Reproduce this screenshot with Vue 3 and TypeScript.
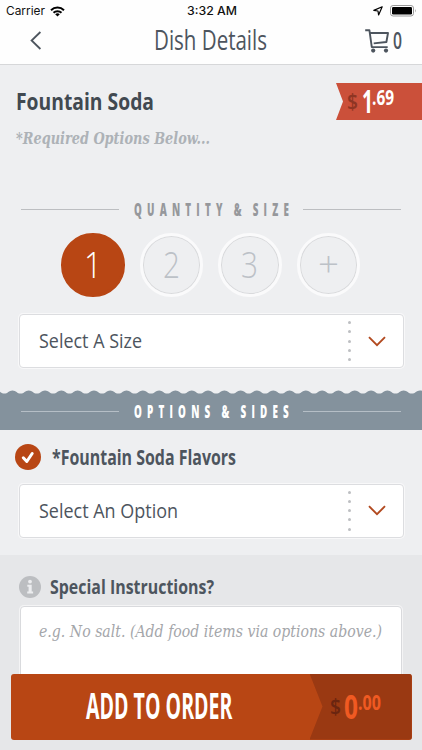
<script setup lang="ts">
import { h, ref } from 'vue'

interface FitProps {
  text: string
  w: number
  size: number
}

// One line of text condensed to a given width; capitals sit centred in the box.
const Fit = (props: FitProps) =>
  h('svg', { width: props.w, height: props.size, overflow: 'visible', 'aria-label': props.text }, [
    h(
      'text',
      {
        x: 0,
        y: props.size * 0.857,
        'font-size': props.size,
        textLength: props.w,
        lengthAdjust: 'spacingAndGlyphs',
        fill: 'currentColor',
      },
      props.text,
    ),
  ])
Fit.props = ['text', 'w', 'size']

const quantities = [
  { label: '1', w: 18, size: 36 },
  { label: '2', w: 17, size: 36 },
  { label: '3', w: 17, size: 36 },
  { label: '+', w: 21, size: 34 },
]
const selected = ref('1')

const dots = [0, 1, 2, 3, 4]

// Scalloped top edge of the options band.
const period = 16.3
const crests = Array.from({ length: 28 }, (_, i) => {
  const x = -12 + i * period
  return `C${x + 3.5} 3.6 ${x + 4.5} .4 ${x + 8.15} .4 S${x + 12.8} 3.6 ${x + period} 3.6`
}).join(' ')
const wavePath = `M-12 3.6 ${crests} V6 H-12 Z`
</script>

<template>
  <div class="screen">
    <div class="status">
      <div class="carrier">
        <Fit class="sys" text="Carrier" :w="39" :size="11.6" />
        <svg width="15" height="11" viewBox="0 0 15 11" fill="none" stroke="#000" stroke-width="2">
          <path d="M1 4.2a9.3 9.3 0 0 1 13 0M3.5 6.8a5.7 5.7 0 0 1 8 0" />
          <path d="M7.5 10.6 5.2 8.3a3.3 3.3 0 0 1 4.6 0z" fill="#000" stroke="none" />
        </svg>
      </div>
      <Fit class="sys time" text="3:32 AM" :w="50" :size="11.6" />
      <div class="power">
        <svg width="10" height="10" viewBox="0 0 10 10" fill="none" stroke="#000" stroke-width="1.2" stroke-linejoin="round">
          <path d="M9.2.8 5.6 9 5 5 .8 4.4z" />
        </svg>
        <svg width="27" height="12" viewBox="0 0 27 12">
          <rect x=".5" y=".5" width="23" height="10.5" rx="2.6" fill="#fff" stroke="#999" />
          <rect x="2" y="2" width="20" height="7.5" rx="1.2" />
          <path d="M25 4q1.4 1.7 0 3.4z" fill="#888" />
        </svg>
      </div>
    </div>

    <header class="nav">
      <svg class="back" width="12" height="19" viewBox="0 0 12 19" fill="none" stroke="#4d555e" stroke-width="1.8">
        <path d="M10.4 1 1.6 9.5l8.8 8.5" />
      </svg>
      <Fit class="title" text="Dish Details" :w="113" :size="27" />
      <div class="cart">
        <svg width="24" height="24" viewBox="0 0 24 24" fill="none" stroke="#4d555e" stroke-width="1.9" stroke-linejoin="round">
          <path d="M.2 1.2h4.2L6.8 18.1h15.9M5 4h18l-1.6 9-12.7 1.4" />
          <circle cx="8.2" cy="21.6" r="2.1" fill="#4d555e" stroke="none" />
          <circle cx="21" cy="21.6" r="2.1" fill="#4d555e" stroke="none" />
        </svg>
        <Fit class="count" text="0" :w="9" :size="23.5" />
      </div>
    </header>

    <section class="dish">
      <div class="names">
        <Fit class="heading" text="Fountain Soda" :w="138" :size="23" />
        <Fit class="note" text="*Required Options Below..." :w="194" :size="16.5" />
      </div>
      <div class="tag">
        <Fit class="dollar" text="$" :w="11" :size="21" />
        <Fit class="whole" text="1" :w="11" :size="33" />
        <Fit class="cents" text=".69" :w="22" :size="21" />
      </div>
    </section>

    <div class="divider">
      <i /><Fit text="QUANTITY &amp; SIZE" :w="160" :size="17" /><i />
    </div>

    <div class="quantities">
      <button
        v-for="q in quantities"
        :key="q.label"
        class="qty"
        :class="{ active: q.label === selected }"
        @click="selected = q.label"
      >
        <Fit :text="q.label" :w="q.w" :size="q.size" />
      </button>
    </div>

    <div class="select size-select">
      <Fit text="Select A Size" :w="103" :size="20" />
      <span class="dots"><b v-for="d in dots" :key="d" /></span>
      <svg width="18" height="11" viewBox="0 0 18 11" fill="none" stroke="#b24a20" stroke-width="1.9">
        <path d="m1 1.2 8 8 8-8" />
      </svg>
    </div>

    <svg class="wave" width="422" height="5" viewBox="0 0 422 5">
      <path :d="wavePath" fill="#84929d" />
    </svg>
    <div class="divider band">
      <i /><Fit text="OPTIONS &amp; SIDES" :w="160" :size="17" /><i />
    </div>

    <div class="option-title">
      <svg width="26" height="26" viewBox="0 0 26 26">
        <circle cx="13" cy="13" r="13" fill="#b84614" />
        <path d="m8.3 13.8 3.5 3.7 5.4-8" fill="none" stroke="#fff" stroke-width="3" stroke-linecap="round" stroke-linejoin="round" />
      </svg>
      <Fit text="*Fountain Soda Flavors" :w="184" :size="20.5" />
    </div>

    <div class="select">
      <Fit text="Select An Option" :w="139" :size="20" />
      <span class="dots"><b v-for="d in dots" :key="d" /></span>
      <svg width="18" height="11" viewBox="0 0 18 11" fill="none" stroke="#b24a20" stroke-width="1.9">
        <path d="m1 1.2 8 8 8-8" />
      </svg>
    </div>

    <section class="special">
      <div class="special-title">
        <svg width="22" height="22" viewBox="0 0 22 22">
          <circle cx="11" cy="11" r="11" fill="#bcbec1" />
          <circle cx="11" cy="5.6" r="1.9" fill="#ecedef" />
          <path d="M8.3 8.8h4.4v6.7h1.4v2H8.2v-2h1.4v-4.7H8.3z" fill="#ecedef" />
        </svg>
        <Fit text="Special Instructions?" :w="164" :size="20" />
      </div>
      <div class="textarea">
        <Fit text="e.g. No salt. (Add food items via options above.)" :w="343" :size="16.5" />
      </div>
    </section>

    <div class="order">
      <div class="order-label"><Fit text="ADD TO ORDER" :w="146.5" :size="36.5" /></div>
      <div class="total">
        <Fit class="dollar" text="$" :w="11" :size="21" />
        <Fit class="whole" text="0" :w="14" :size="34" />
        <Fit class="cents" text=".00" :w="23" :size="21" />
      </div>
    </div>
  </div>
</template>

<style>
body {
  margin: 0;
  overflow: hidden;
}
</style>

<style scoped>
.screen {
  position: relative;
  width: 422px;
  height: 750px;
  overflow: hidden;
  background: #eeeff1;
  color: #4d555e;
  font-family: 'Open Sans', 'Noto Sans', sans-serif;
}
svg {
  display: block;
  flex: none;
}
.status {
  display: grid;
  grid-template-columns: 1fr auto 1fr;
  align-items: center;
  height: 22px;
  padding: 0 5px 0 6px;
  background: #fefefe;
  color: #111;
}
.carrier,
.power {
  display: flex;
  align-items: center;
  gap: 5px;
}
.power {
  justify-content: flex-end;
  gap: 7px;
}
.sys {
  font-family: Inter, 'Liberation Sans', sans-serif;
}
.time {
  margin-left: 1px;
  font-weight: 500;
}
.nav {
  display: grid;
  grid-template-columns: 1fr auto 1fr;
  align-items: center;
  height: 43px;
  box-sizing: border-box;
  padding: 0 20px 5px 30px;
  border-bottom: 1px solid #d6d7d9;
  background: #fefefe;
}
.title {
  margin-left: -11px;
}
.cart {
  display: flex;
  align-items: center;
  justify-content: flex-end;
  gap: 4px;
}
.cart svg:first-child {
  margin-top: 1px;
}
.count {
  font-weight: 600;
}
.dish {
  display: flex;
  justify-content: space-between;
  align-items: flex-start;
  height: 136px;
}
.names {
  padding: 25px 0 0 16px;
}
.heading {
  font-weight: 700;
  color: #414951;
}
.note {
  margin-top: 17px;
  font-family: 'DejaVu Serif', serif;
  font-style: italic;
  font-weight: 700;
  color: #adb2b7;
}
.tag {
  display: flex;
  align-items: flex-start;
  width: 75px;
  height: 37px;
  margin-top: 18px;
  padding-left: 11px;
  background: #cb503a;
  clip-path: polygon(0 0, 100% 0, 100% 100%, 0 100%, 7px 50%);
  color: #fff;
  font-weight: 700;
}
.tag .dollar {
  margin-top: 8px;
  color: #8f3523;
  font-weight: 600;
}
.tag .whole {
  margin: 2px 0 0 4px;
}
.tag .cents {
  margin: 4px 0 0 -1px;
}
.divider {
  display: flex;
  align-items: center;
  height: 17px;
  padding: 0 21px;
  color: #96989c;
  font-weight: 800;
  letter-spacing: 9px;
  word-spacing: -3px;
}
.divider i {
  width: 98px;
  height: 1px;
  background: #bcbec1;
}
.divider svg {
  margin: 0 9px 0 15px;
}
.quantities {
  display: flex;
  gap: 15px;
  padding: 15px 0 0 61px;
}
.qty {
  display: grid;
  place-items: center;
  width: 63.5px;
  height: 63.5px;
  box-sizing: border-box;
  padding: 0;
  border: 3px solid #fafafb;
  border-radius: 50%;
  box-shadow: inset 0 0 0 1px #d9dadc;
  background: #eeeff1;
  color: #bcc1c7;
  font-family: inherit;
  font-weight: 300;
}
.qty.active {
  border-color: #b84614;
  box-shadow: none;
  background: #b84614;
  color: #fff;
}
.select {
  display: flex;
  align-items: center;
  box-sizing: border-box;
  width: 385px;
  height: 54px;
  margin: 0 0 0 18.5px;
  padding: 0 17px 0 19px;
  border: 1px solid #dcdde0;
  border-radius: 4px;
  box-shadow: 0 0 0 1px #f8f8f9;
  background: #fff;
}
.size-select {
  margin-top: 17.5px;
}
.dots {
  display: flex;
  flex-direction: column;
  gap: 6.25px;
  margin: 0 17px 0 auto;
}
.dots b {
  width: 3px;
  height: 3px;
  border-radius: 50%;
  background: #bdbfc2;
}
.wave {
  margin-top: 21.5px;
}
.band {
  box-sizing: border-box;
  height: 35px;
  padding-bottom: 1.5px;
  background: #84929d;
  color: #fff;
}
.band i {
  background: #b5bec6;
}
.option-title {
  display: flex;
  align-items: center;
  gap: 11px;
  height: 54px;
  padding-left: 15px;
  font-weight: 700;
}
.option-title svg + svg {
  margin-top: 1px;
}
.special {
  margin-top: 17px;
  height: 195px;
  padding-top: 21px;
  background: #e6e7e9;
}
.special-title {
  display: flex;
  align-items: center;
  gap: 9px;
  padding-left: 19px;
  font-weight: 700;
}
.textarea {
  box-sizing: border-box;
  width: 382px;
  height: 130px;
  margin: 8px 0 0 20px;
  padding: 16px 18px;
  border: 1px solid #d9dadd;
  border-radius: 4px;
  box-shadow: 0 0 0 1px #f4f4f5;
  background: #fff;
  color: #a4a6aa;
  font-family: 'DejaVu Serif', serif;
  font-style: italic;
}
.order {
  position: absolute;
  left: 10.5px;
  bottom: 10.5px;
  display: flex;
  width: 401px;
  height: 66px;
  overflow: hidden;
  border-radius: 3px;
  background: #b84614;
  color: #fff;
  font-weight: 700;
}
.order-label {
  display: flex;
  align-items: center;
  width: 224px;
  padding-left: 75px;
}
.total {
  display: flex;
  align-items: flex-start;
  flex: 1;
  padding: 0 0 0 20px;
  background: #9a3912;
  clip-path: polygon(0 0, 100% 0, 100% 100%, 0 100%, 13px 50%);
  color: #f05a22;
}
.total .dollar {
  margin-top: 22px;
  color: #6a2510;
  font-weight: 600;
}
.total .whole {
  margin: 16px 0 0 3px;
}
.total .cents {
  margin: 18px 0 0;
}
</style>
